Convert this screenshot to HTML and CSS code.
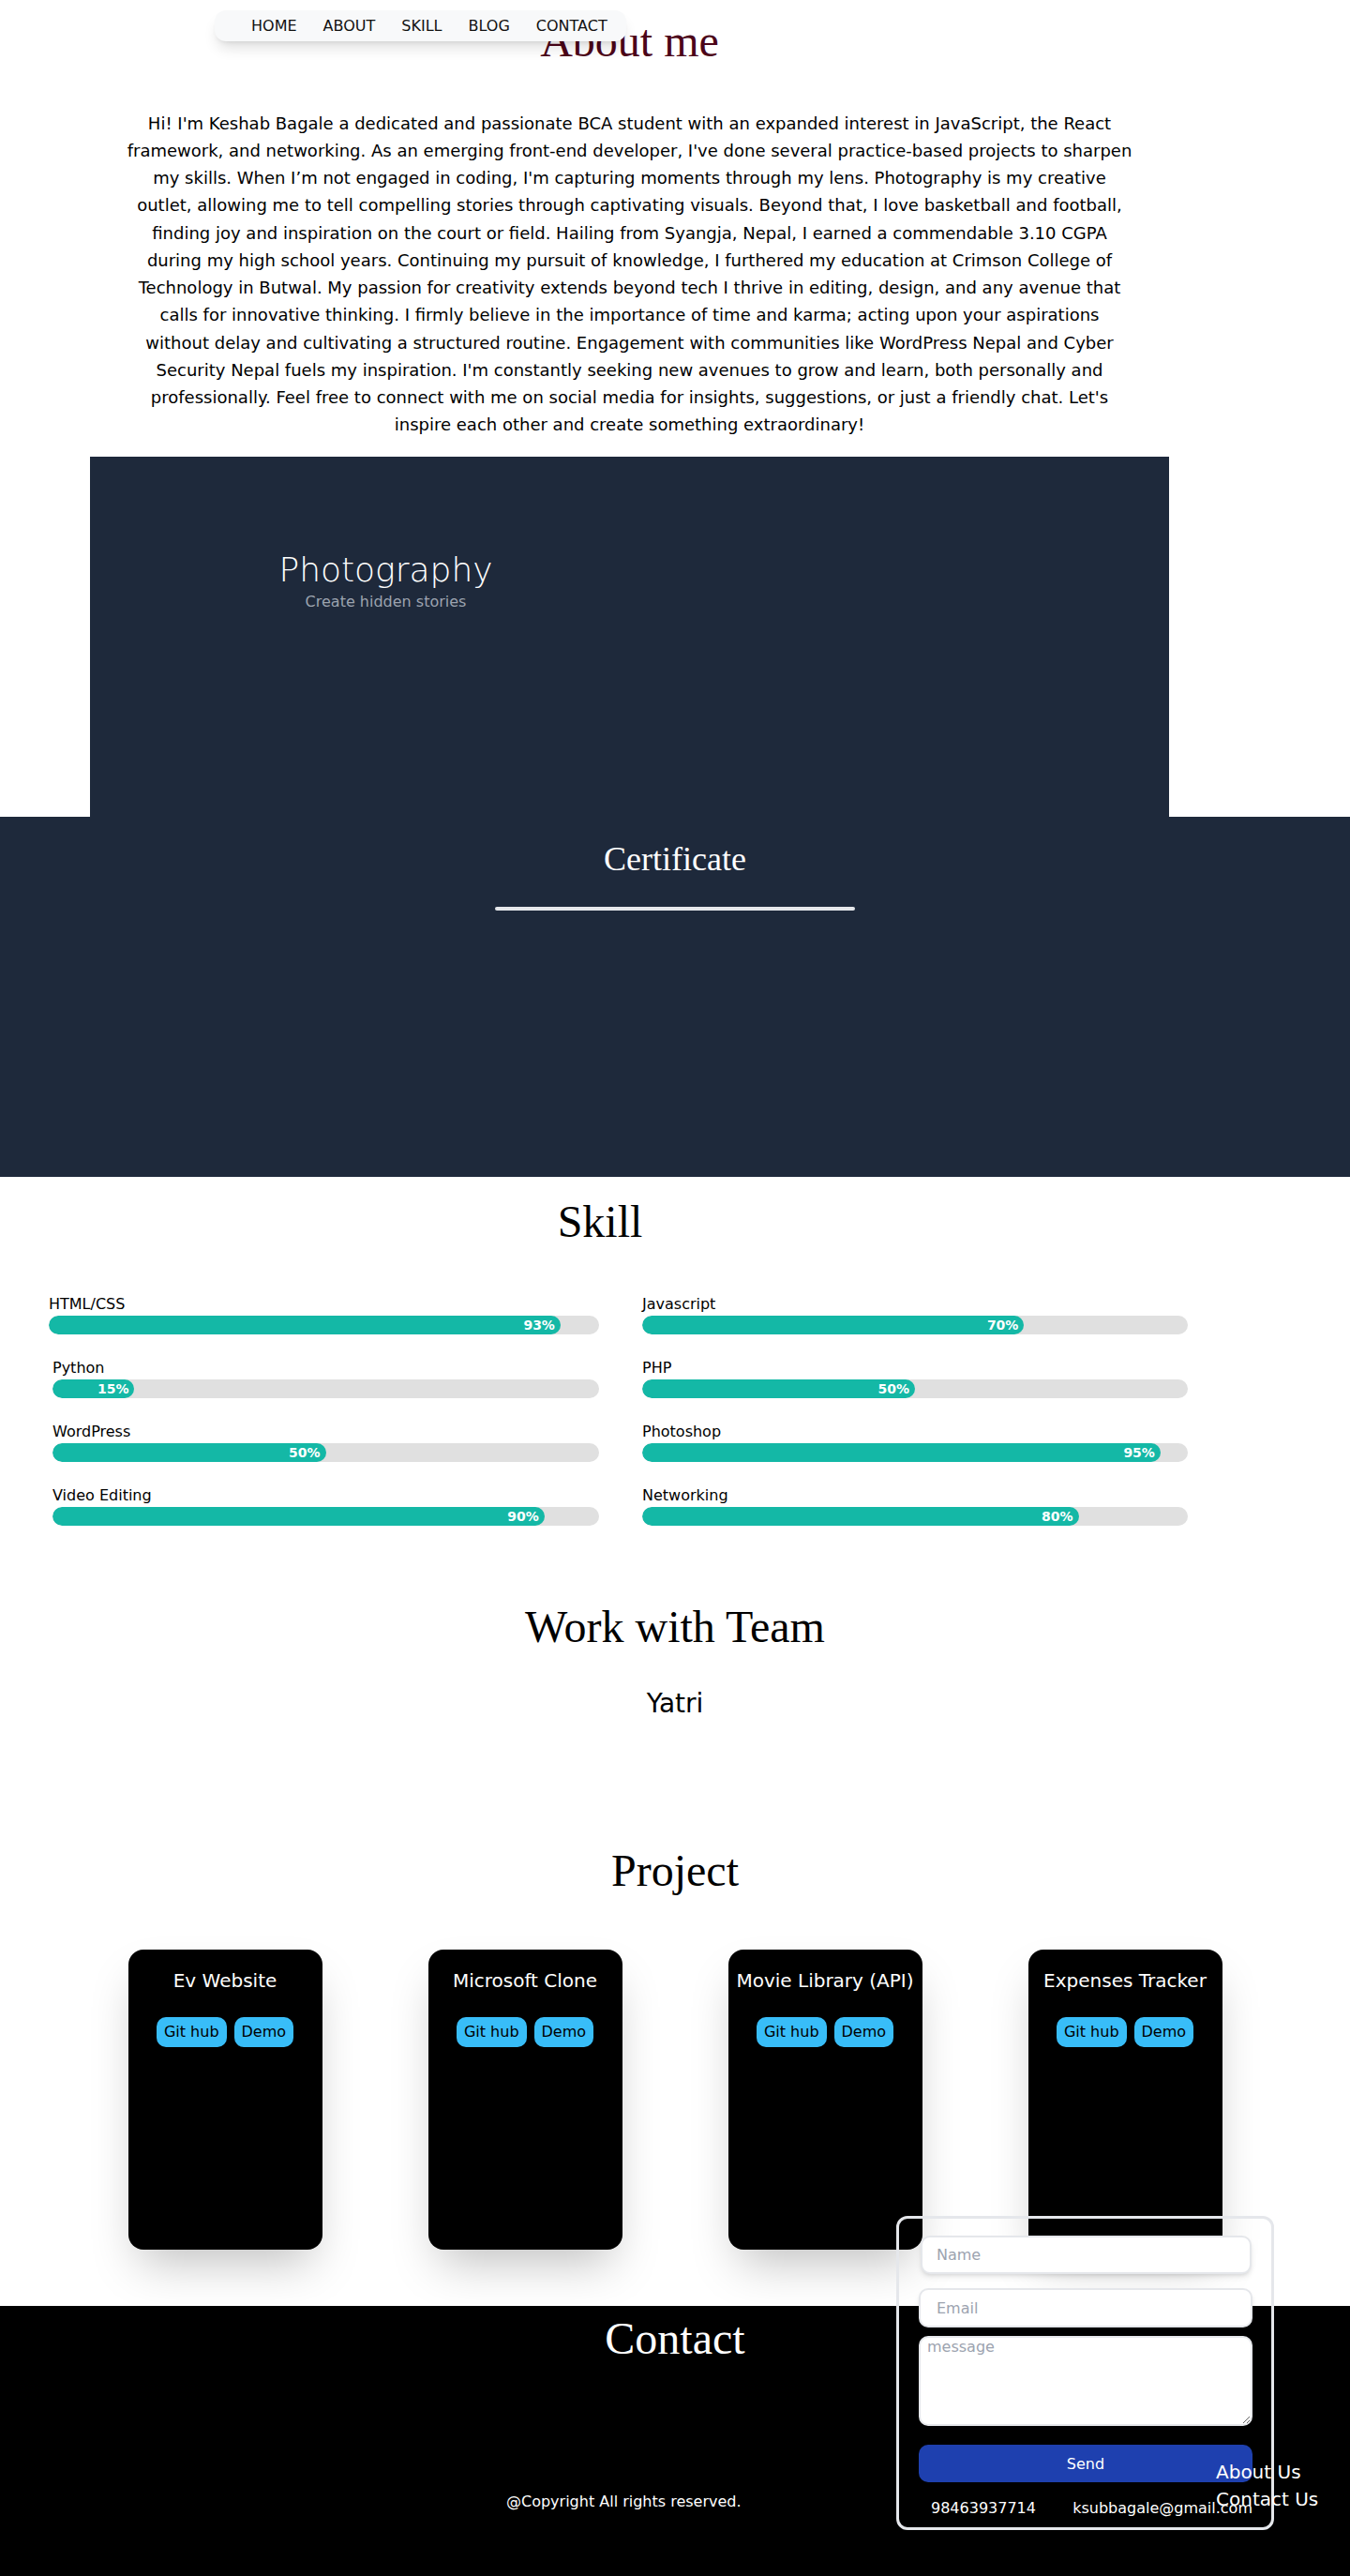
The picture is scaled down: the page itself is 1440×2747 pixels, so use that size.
FILE: index.html
```html
<!DOCTYPE html>
<html lang="en">
<head>
<meta charset="utf-8">
<title>Keshab Bagale</title>
<link rel="stylesheet" href="styles.css">
</head>
<body>
<nav class="nav">
  <a href="#home">HOME</a>
  <a href="#about">ABOUT</a>
  <a href="#skill">SKILL</a>
  <a href="#blog">BLOG</a>
  <a href="#contact">CONTACT</a>
</nav>

<section class="about" id="about">
  <h1 class="about-title">About me</h1>
  <p class="about-text">Hi! I'm Keshab Bagale a dedicated and passionate BCA student with an expanded interest in JavaScript, the React framework, and networking. As an emerging front-end developer, I've done several practice-based projects to sharpen my skills. When I’m not engaged in coding, I'm capturing moments through my lens. Photography is my creative outlet, allowing me to tell compelling stories through captivating visuals. Beyond that, I love basketball and football, finding joy and inspiration on the court or field. Hailing from Syangja, Nepal, I earned a commendable 3.10 CGPA during my high school years. Continuing my pursuit of knowledge, I furthered my education at Crimson College of Technology in Butwal. My passion for creativity extends beyond tech I thrive in editing, design, and any avenue that calls for innovative thinking. I firmly believe in the importance of time and karma; acting upon your aspirations without delay and cultivating a structured routine. Engagement with communities like WordPress Nepal and Cyber Security Nepal fuels my inspiration. I'm constantly seeking new avenues to grow and learn, both personally and professionally. Feel free to connect with me on social media for insights, suggestions, or just a friendly chat. Let's inspire each other and create something extraordinary!</p>
</section>

<section class="photo-wrap">
  <div class="photo">
    <div class="photo-text">
      <h2 class="photo-title">Photography</h2>
      <p class="photo-sub">Create hidden stories</p>
    </div>
  </div>
</section>

<section class="cert">
  <h2 class="cert-title">Certificate</h2>
  <div class="cert-bar"></div>
</section>

<section class="skills" id="skill">
  <h2 class="skills-title">Skill</h2>
  <div class="skills-grid">
    <div class="skill skill-first">
      <div class="skill-name">HTML/CSS</div>
      <div class="track"><div class="fill" style="width:93%">93%</div></div>
    </div>
    <div class="skill">
      <div class="skill-name">Javascript</div>
      <div class="track"><div class="fill" style="width:70%">70%</div></div>
    </div>
    <div class="skill">
      <div class="skill-name">Python</div>
      <div class="track"><div class="fill" style="width:15%">15%</div></div>
    </div>
    <div class="skill">
      <div class="skill-name">PHP</div>
      <div class="track"><div class="fill" style="width:50%">50%</div></div>
    </div>
    <div class="skill">
      <div class="skill-name">WordPress</div>
      <div class="track"><div class="fill" style="width:50%">50%</div></div>
    </div>
    <div class="skill">
      <div class="skill-name">Photoshop</div>
      <div class="track"><div class="fill" style="width:95%">95%</div></div>
    </div>
    <div class="skill">
      <div class="skill-name">Video Editing</div>
      <div class="track"><div class="fill" style="width:90%">90%</div></div>
    </div>
    <div class="skill">
      <div class="skill-name">Networking</div>
      <div class="track"><div class="fill" style="width:80%">80%</div></div>
    </div>
  </div>
</section>

<section class="team">
  <h2 class="team-title">Work with Team</h2>
  <p class="team-name">Yatri</p>
</section>

<section class="projects">
  <h2 class="projects-title">Project</h2>
  <div class="cards">
    <div class="card">
      <h3 class="card-title">Ev Website</h3>
      <div class="card-btns"><a class="btn" href="#">Git hub</a><a class="btn" href="#">Demo</a></div>
    </div>
    <div class="card">
      <h3 class="card-title">Microsoft Clone</h3>
      <div class="card-btns"><a class="btn" href="#">Git hub</a><a class="btn" href="#">Demo</a></div>
    </div>
    <div class="card">
      <h3 class="card-title">Movie Library (API)</h3>
      <div class="card-btns"><a class="btn" href="#">Git hub</a><a class="btn" href="#">Demo</a></div>
    </div>
    <div class="card">
      <h3 class="card-title">Expenses Tracker</h3>
      <div class="card-btns"><a class="btn" href="#">Git hub</a><a class="btn" href="#">Demo</a></div>
    </div>
  </div>
</section>

<footer class="footer" id="contact">
  <h2 class="footer-title">Contact</h2>
  <form class="contact-form">
    <input class="field field-name" type="text" placeholder="Name">
    <input class="field field-email" type="email" placeholder="Email">
    <textarea class="field field-msg" placeholder="message"></textarea>
    <button class="send" type="button">Send</button>
    <div class="info">
      <span>98463937714</span>
      <span>ksubbagale@gmail.com</span>
    </div>
  </form>
  <div class="footer-bottom">
    <p class="copyright">@Copyright All rights reserved.</p>
    <div class="footer-links">
      <a href="#about">About Us</a>
      <a href="#contact">Contact Us</a>
    </div>
  </div>
</footer>
</body>
</html>
```

FILE: styles.css
```css
* {
  box-sizing: border-box;
}

html, body {
  margin: 0;
  padding: 0;
  background: #ffffff;
}

body {
  font-family: "DejaVu Sans", "Liberation Sans", sans-serif;
  font-size: 16px;
  color: #000;
}

h1, h2, h3, p {
  margin: 0;
  font-weight: normal;
}

a {
  color: inherit;
  text-decoration: none;
}

/* ---------- nav ---------- */
.nav {
  position: absolute;
  top: 11px;
  left: 229px;
  width: 439px;
  height: 33px;
  display: flex;
  align-items: center;
  gap: 28px;
  padding-left: 39px;
  background: #f8f9fa;
  border-radius: 12px;
  box-shadow: 0 10px 15px -3px rgba(0, 0, 0, 0.12), 0 4px 6px -4px rgba(0, 0, 0, 0.12);
  z-index: 10;
}

.nav a {
  font-size: 16px;
  line-height: 33px;
  color: #111;
}

/* ---------- about ---------- */
.about {
  width: 1343px;
  padding-top: 17px;
}

.about-title {
  font-family: "Liberation Serif", "Times New Roman", serif;
  font-size: 48px;
  line-height: 53px;
  text-align: center;
  color: #4c0519;
  margin-bottom: 46.5px;
}

.about-text {
  width: 1074px;
  margin: 0 auto;
  font-size: 18px;
  line-height: 29.25px;
  text-align: center;
  color: #000;
}

/* ---------- photography ---------- */
.photo-wrap {
  padding-top: 19.5px;
  padding-left: 96px;
}

.photo {
  width: 1151px;
  height: 384px;
  background: #1e293b;
  padding-top: 100px;
}

.photo-text {
  width: 300px;
  margin-left: 165.5px;
  text-align: center;
}

.photo-title {
  font-family: "DejaVu Sans", sans-serif;
  font-weight: 200;
  font-size: 36px;
  line-height: 42px;
  color: #ffffff;
}

.photo-sub {
  margin-top: 3px;
  font-size: 16px;
  line-height: 19px;
  color: #9ca3af;
}

/* ---------- certificate ---------- */
.cert {
  height: 384px;
  background: #1e293b;
  padding-top: 25px;
  text-align: center;
}

.cert-title {
  font-family: "Liberation Serif", "Times New Roman", serif;
  font-size: 36px;
  line-height: 40px;
  color: #ffffff;
}

.cert-bar {
  width: 384px;
  height: 4px;
  margin: 31px auto 0;
  background: #e5e7eb;
  border-radius: 2px;
}

/* ---------- skills ---------- */
.skills {
  padding-top: 21px;
}

.skills-title {
  width: 1280px;
  font-family: "Liberation Serif", "Times New Roman", serif;
  font-size: 48px;
  line-height: 53px;
  text-align: center;
}

.skills-grid {
  margin-top: 52px;
  padding-left: 56px;
  display: grid;
  grid-template-columns: 583px 582px;
  column-gap: 46px;
  row-gap: 26px;
}

.skill-first {
  margin-left: -4px;
}

.skill-name {
  font-size: 16px;
  line-height: 19px;
  margin-bottom: 3px;
}

.track {
  height: 20px;
  background: #e0e0e0;
  border-radius: 10px;
  overflow: hidden;
}

.fill {
  height: 20px;
  background: #14b8a6;
  border-radius: 10px;
  color: #fff;
  font-weight: bold;
  font-size: 14px;
  line-height: 20px;
  text-align: right;
  padding-right: 6px;
}

/* ---------- team ---------- */
.team {
  padding-top: 81px;
  text-align: center;
}

.team-title {
  font-family: "Liberation Serif", "Times New Roman", serif;
  font-size: 48px;
  line-height: 53px;
}

.team-name {
  margin-top: 39px;
  font-size: 28px;
  line-height: 33px;
}

/* ---------- projects ---------- */
.projects {
  padding-top: 135px;
  padding-bottom: 60px;
}

.projects-title {
  font-family: "Liberation Serif", "Times New Roman", serif;
  font-size: 48px;
  line-height: 53px;
  text-align: center;
}

.cards {
  margin-top: 58px;
  display: flex;
  justify-content: center;
  gap: 113px;
}

.card {
  width: 207px;
  height: 320px;
  background: #000;
  border-radius: 16px;
  padding-top: 22px;
  box-shadow: 0 25px 50px -12px rgba(0, 0, 0, 0.25);
  text-align: center;
}

.card-title {
  font-size: 20px;
  line-height: 23px;
  color: #fff;
  white-space: nowrap;
}

.card-btns {
  margin-top: 27px;
  display: flex;
  justify-content: center;
  gap: 8px;
}

.btn {
  display: block;
  height: 32px;
  line-height: 32px;
  padding: 0 8px;
  background: #38bdf8;
  border-radius: 10px;
  color: #000;
  font-size: 16px;
}

/* ---------- footer ---------- */
.footer {
  position: relative;
  height: 288px;
  background: #000;
  color: #fff;
  padding-top: 8px;
}

.footer-title {
  font-family: "Liberation Serif", "Times New Roman", serif;
  font-size: 48px;
  line-height: 53px;
  text-align: center;
}

.contact-form {
  position: absolute;
  left: 956px;
  top: -96px;
  width: 403px;
  height: 335px;
  border: 3px solid #e5e7eb;
  border-radius: 12px;
  padding: 18px 20px 0 21px;
  background: transparent;
  z-index: 1;
}

.field {
  display: block;
  width: 100%;
  font-family: "DejaVu Sans", sans-serif;
  font-size: 16px;
  color: #111;
  background: #fff;
  border: 2px solid #e5e7eb;
  border-radius: 10px;
  outline: none;
  box-shadow: 0 4px 6px -1px rgba(0, 0, 0, 0.1), 0 2px 4px -2px rgba(0, 0, 0, 0.1);
}

.field::placeholder {
  color: #9ca3af;
}

.field-name {
  width: 353px;
  margin-left: 2px;
  height: 41px;
  padding: 0 15px;
  margin-bottom: 15px;
}

.field-email {
  height: 42px;
  padding: 0 17px;
  margin-bottom: 9px;
}

.field-msg {
  height: 96px;
  padding: 0 7px;
  resize: vertical;
  line-height: 19px;
  margin-bottom: 20px;
  box-shadow: none;
}

.send {
  display: block;
  width: 100%;
  height: 40px;
  border: none;
  border-radius: 10px;
  background: #1e40af;
  color: #fff;
  font-family: "DejaVu Sans", sans-serif;
  font-size: 16px;
}

.info {
  margin-top: 18px;
  padding-left: 13px;
  display: flex;
  justify-content: space-between;
  font-size: 16px;
  line-height: 19px;
  color: #fff;
}

.footer-bottom {
  display: flex;
  align-items: flex-start;
  margin-top: 101.5px;
}

.copyright {
  margin-left: 540px;
  margin-top: 36.5px;
  font-size: 16px;
  line-height: 19px;
  color: #fff;
}

.footer-links {
  position: relative;
  z-index: 2;
  margin-left: auto;
  width: 143px;
  display: flex;
  flex-direction: column;
}

.footer-links a {
  font-size: 20px;
  line-height: 29px;
  color: #fff;
}
```
